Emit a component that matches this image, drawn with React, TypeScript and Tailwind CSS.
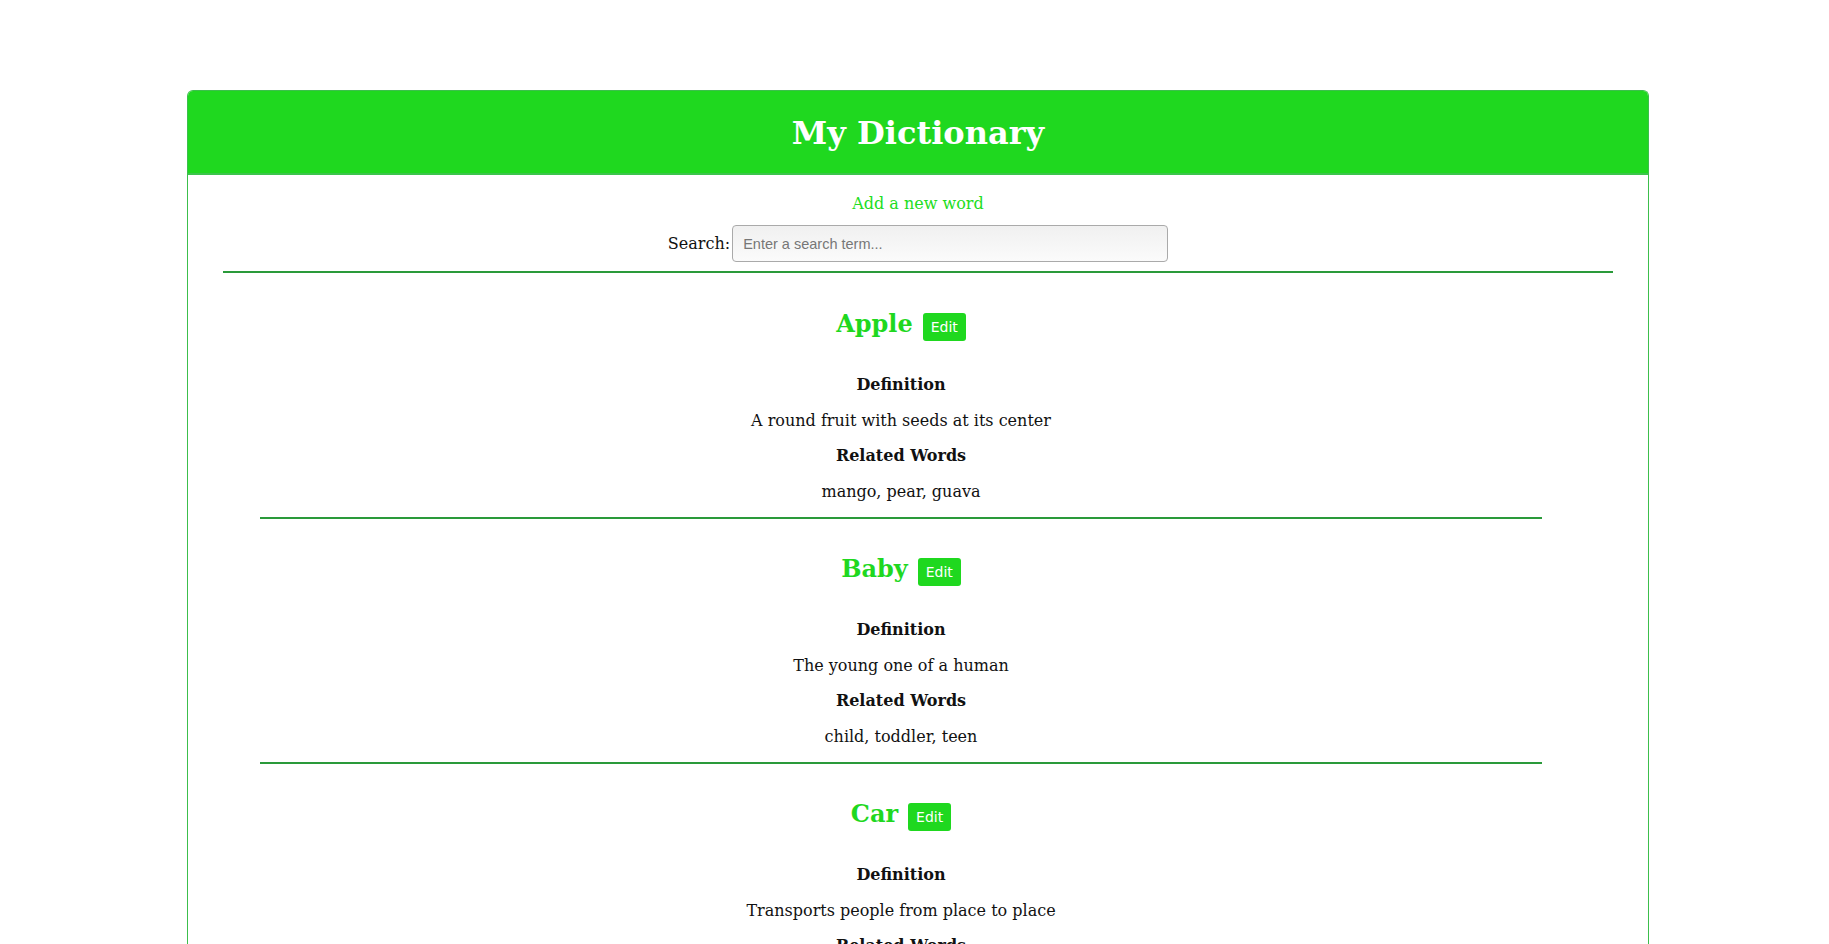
import React from "react"

type Word = {
    term: string;
    definition: string;
    related: string[];
};

const words: Word[] = [
    { term: "Apple", definition: "A round fruit with seeds at its center", related: ["mango", "pear", "guava"] },
    { term: "Baby", definition: "The young one of a human", related: ["child", "toddler", "teen"] },
    { term: "Car", definition: "Transports people from place to place", related: ["bus", "truck", "van"] },
    { term: "Dog", definition: "A domesticated animal that barks", related: ["cat", "puppy", "wolf"] },
]

const WordEntry = ({ word }: { word: Word }) => {
    return (
        <li className="pt-[36px] flex flex-col items-center">
            {/* term + edit */}
            <div className="flex items-baseline gap-[10px] h-[28px]">
                <h2 className="text-[24px] leading-[28px] font-bold text-[#1fd81f]">{word.term}</h2>
                <button className="bg-[#1fd81f] text-white font-['DejaVu_Sans',sans-serif] text-[14px] leading-[16px] px-[8px] py-[6px] rounded-[3px]">
                    Edit
                </button>
            </div>
            <div className="mt-[37px] flex flex-col items-center gap-[16px] text-[16px] leading-[19.5px] text-[#111]">
                <h4 className="font-bold">Definition</h4>
                <p>{word.definition}</p>
                <h4 className="font-bold">Related Words</h4>
                <p>{word.related.join(", ")}</p>
            </div>
            <hr className="mt-[16px] w-full border-0 border-t-2 border-[#2a9a3a]" />
        </li>
    )
}

export default function App() {
    return (
        <main className="min-h-screen bg-white pt-[90px] font-['DejaVu_Serif',serif]">
            <div className="ml-[187px] w-[1462px] border border-b-0 border-[#3cbf4c] rounded-t-[6px] overflow-hidden">
                {/* Header */}
                <header className="h-[84px] pt-[2px] bg-[#1fd81f] border-b-2 border-[#3cc44c] flex items-center justify-center">
                    <h1 className="text-white text-[32px] font-bold leading-none">My Dictionary</h1>
                </header>

                <div className="px-[35px]">
                    {/* Top controls */}
                    <div className="flex flex-col items-center pt-[19px]">
                        <a className="text-[16px] leading-[19px] text-[#22dd22] cursor-pointer">Add a new word</a>
                        <div className="mt-[12px] flex items-center gap-[2px]">
                            <label className="text-[16px] text-[#111]">Search:</label>
                            <input
                                type="text"
                                placeholder="Enter a search term..."
                                className="w-[436px] h-[37px] px-[10px] border border-[#aaa] rounded-[4px] bg-gradient-to-b from-[#f0f0f0] to-[#fbfbfb] font-['Liberation_Sans',sans-serif] text-[14.5px] placeholder:text-[#777] outline-none"
                            />
                        </div>
                    </div>
                    <hr className="mt-[9px] border-0 border-t-2 border-[#2a9a3a]" />

                    {/* Word list */}
                    <ul className="pt-[1px] pl-[37px] pr-[71px]">
                        {words.map((w) => (
                            <WordEntry key={w.term} word={w} />
                        ))}
                    </ul>
                </div>
            </div>
        </main>
    )
}
